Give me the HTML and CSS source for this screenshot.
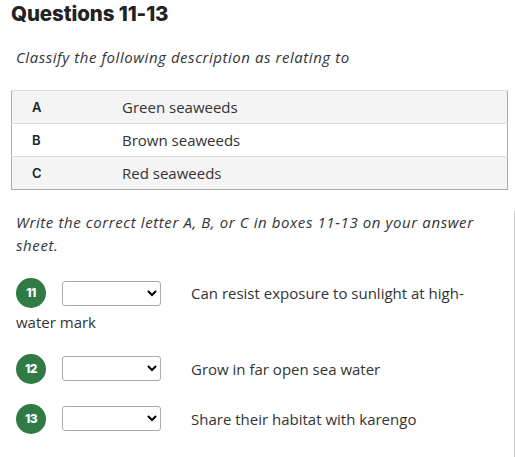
FILE: index.html
```html
<!DOCTYPE html>
<html>
<head>
<meta charset="utf-8">
<link rel="stylesheet" href="styles.css">
</head>
<body>
<div class="page">
  <h2 class="title">Questions 11-13</h2>
  <p class="intro">Classify the following description as relating to</p>
  <table class="options">
    <tr class="shade"><td class="letter">A</td><td>Green seaweeds</td></tr>
    <tr><td class="letter">B</td><td>Brown seaweeds</td></tr>
    <tr class="shade"><td class="letter">C</td><td>Red seaweeds</td></tr>
  </table>
  <div class="questions">
    <p class="instr">Write the correct letter A, B, or C in boxes 11-13 on your answer sheet.</p>
    <div class="q"><span class="num">11</span><select class="ans"><option></option><option>A</option><option>B</option><option>C</option></select><span class="qtext">Can resist exposure to sunlight at high-water mark</span></div>
    <div class="q"><span class="num">12</span><select class="ans"><option></option><option>A</option><option>B</option><option>C</option></select><span class="qtext">Grow in far open sea water</span></div>
    <div class="q"><span class="num">13</span><select class="ans"><option></option><option>A</option><option>B</option><option>C</option></select><span class="qtext">Share their habitat with karengo</span></div>
  </div>
</div>
</body>
</html>
```
FILE: styles.css
```css
html, body {
  margin: 0;
  padding: 0;
  background: #fff;
}
body {
  font-family: "Open Sans", sans-serif;
  color: #333;
  font-size: 15px;
}
.page {
  padding: 0 8px 0 11px;
}
.title {
  font-family: "Inter", sans-serif;
  font-weight: 800;
  font-size: 20.5px;
  color: #222;
  margin: 0;
  padding-top: 2px;
  line-height: 24px;
  letter-spacing: -0.1px;
}
.intro {
  font-style: italic;
  margin: 20px 0 0 5px;
  line-height: 22px;
  letter-spacing: 0.55px;
}
.options {
  border-collapse: collapse;
  border: 1px solid #aaa;
  width: 497px;
  margin-top: 22px;
}
.options td {
  height: 32px;
  padding: 0;
  border-top: 1px solid #ddd;
  vertical-align: middle;
}
.options tr.shade td {
  background: #f4f4f4;
}
.options td.letter {
  width: 90px;
  padding-left: 20px;
  font-family: "Inter", sans-serif;
  font-weight: 600;
  font-size: 13px;
  color: #222;
}
.questions {
  border-right: 1px solid #ccc;
  margin-right: -8px;
  margin-left: -11px;
  padding-left: 16px;
  padding-right: 30px;
  margin-top: 21px;
  padding-bottom: 30px;
}
.instr {
  font-style: italic;
  margin: 0;
  line-height: 23px;
  letter-spacing: 0.6px;
}
.q {
  line-height: 24px;
  margin-top: 21px;
}
.q + .q {
  margin-top: 20px;
}
.num {
  display: inline-block;
  width: 30px;
  height: 30px;
  border-radius: 50%;
  background: #2f7a45;
  color: #fff;
  font-family: "Inter", sans-serif;
  font-weight: 800;
  font-size: 12px;
  line-height: 30px;
  text-align: center;
  vertical-align: middle;
  letter-spacing: -0.5px;
}
.ans {
  width: 99px;
  height: 25px;
  margin: 0 30px 0 16px;
  vertical-align: middle;
  border: 1px solid #aaa;
  border-radius: 3px;
  background: #fff;
}
.qtext {
  vertical-align: middle;
}
```
